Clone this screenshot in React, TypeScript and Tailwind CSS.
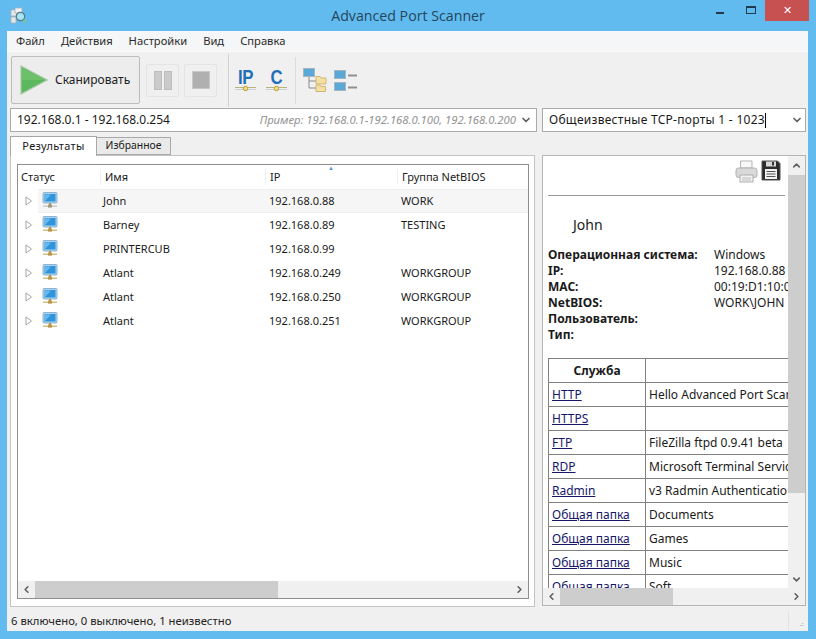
import React from "react";
import { ChevronDown, ChevronUp, ChevronLeft, ChevronRight } from "lucide-react";

const hosts = [
  { name: "John", ip: "192.168.0.88", group: "WORK", active: true },
  { name: "Barney", ip: "192.168.0.89", group: "TESTING" },
  { name: "PRINTERCUB", ip: "192.168.0.99", group: "" },
  { name: "Atlant", ip: "192.168.0.249", group: "WORKGROUP" },
  { name: "Atlant", ip: "192.168.0.250", group: "WORKGROUP" },
  { name: "Atlant", ip: "192.168.0.251", group: "WORKGROUP" },
];

const info = [
  ["Операционная система:", "Windows"],
  ["IP:", "192.168.0.88"],
  ["MAC:", "00:19:D1:10:05:3F"],
  ["NetBIOS:", "WORK\\JOHN"],
  ["Пользователь:", ""],
  ["Тип:", ""],
];

const services = [
  ["HTTP", "Hello Advanced Port Scanner"],
  ["HTTPS", ""],
  ["FTP", "FileZilla ftpd 0.9.41 beta"],
  ["RDP", "Microsoft Terminal Services"],
  ["Radmin", "v3 Radmin Authentication"],
  ["Общая папка", "Documents"],
  ["Общая папка", "Games"],
  ["Общая папка", "Music"],
  ["Общая папка", "Soft"],
];

function Monitor({ dim }: { dim?: boolean }) {
  return (
    <svg width="16" height="16" viewBox="0 0 16 16">
      <rect x="1" y="0.5" width="14" height="10.5" rx="1" fill="#a9d3ee" stroke="#8fb4cf" />
      <rect x="2.5" y="2" width="11" height="7.5" fill="#2f95dc" />
      <path d="M3 9 L9 2.5 H3 Z" fill="#6ab8ea" />
      <rect x="7" y="11" width="2" height="2" fill={dim ? "#9a9a8a" : "#b08f4c"} />
      <path d="M1 14.2 H15" stroke={dim ? "#c8c8c0" : "#d2b96f"} strokeWidth="1.4" />
      <rect x="6" y="12.6" width="4" height="3" fill={dim ? "#a09a80" : "#b9964a"} />
    </svg>
  );
}

function Expander() {
  return (
    <svg width="8" height="10" viewBox="0 0 8 10">
      <path d="M1 1 L6.5 5 L1 9 Z" fill="#fff" stroke="#a6a6a6" />
    </svg>
  );
}

function Play() {
  return (
    <svg width="28" height="30" viewBox="0 0 28 30">
      <path d="M1 1 L27 15 L1 29 Z" fill="#5cb85c" stroke="#a8c9a8" strokeWidth="1.2" />
      <path d="M1.8 2.4 L25.5 15 L1.8 15 Z" fill="#6cc06a" />
    </svg>
  );
}

function NetMark({ label }: { label: string }) {
  return (
    <div className="flex w-[21px] flex-col items-center">
      <span className="h-[17px] font-['Liberation_Sans',sans-serif] text-[21px] leading-[17px] font-bold tracking-[-0.5px] text-[#1f6fb8] [transform:scaleX(0.8)]">
        {label}
      </span>
      <svg width="21" height="7" viewBox="0 0 21 7">
        <path d="M0 2.5 H21" stroke="#b8b37e" />
        <path d="M0 4.5 H21" stroke="#cfcfcf" />
        <circle cx="10.5" cy="3.5" r="2.2" fill="#f3e07a" stroke="#b89c3d" />
      </svg>
    </div>
  );
}

function Tree() {
  return (
    <svg width="24" height="24" viewBox="0 0 24 24">
      <path d="M6 9 V20 H13 M6 13 H13" fill="none" stroke="#8a8a8a" />
      <rect x="0.5" y="0.5" width="11" height="8" fill="#5aa8d8" stroke="#a5b4be" />
      <path d="M13 8.5 h4 l1 1.5 h5 v6 h-10 Z" fill="#f5e0a3" stroke="#d0b577" />
      <path d="M13 17 h4 l1 1.5 h4.5 v5 h-9.5 Z" fill="#f5e0a3" stroke="#d0b577" />
    </svg>
  );
}

function Lists() {
  return (
    <svg width="23" height="21" viewBox="0 0 23 21">
      <rect x="0.5" y="0.5" width="11" height="8" fill="#5aa8d8" stroke="#a5b4be" />
      <rect x="0.5" y="12.5" width="11" height="8" fill="#5aa8d8" stroke="#a5b4be" />
      <path d="M14 5.5 H23 M14 17.5 H23" stroke="#8f8f8f" strokeWidth="2" />
    </svg>
  );
}

function Printer() {
  return (
    <svg width="23" height="23" viewBox="0 0 23 23">
      <path d="M5.5 1 H17 V8 H5.5 Z" fill="#f8f8f8" stroke="#b5b5b5" />
      <rect x="1" y="8" width="21" height="9.5" rx="2.5" fill="#d9d9d9" stroke="#b0b0b0" />
      <rect x="5" y="15" width="13" height="7" fill="#f2f2f2" stroke="#adadad" />
      <path d="M7 18 H16 M7 20 H16" stroke="#bcbcbc" />
    </svg>
  );
}

function Floppy() {
  return (
    <svg width="20" height="21" viewBox="0 0 20 21">
      <path d="M1 1 H16.5 L19 3.5 V20 H1 Z" fill="#2b2b2b" stroke="#555" />
      <rect x="5" y="1.5" width="10" height="5" fill="#d9d9d9" />
      <rect x="11" y="2" width="2" height="3.5" fill="#333" />
      <rect x="4" y="9" width="12" height="10" fill="#f2f2f2" />
      <path d="M5.5 11.5 H14.5 M5.5 14 H14.5 M5.5 16.5 H14.5" stroke="#555" />
    </svg>
  );
}

function AppIcon() {
  return (
    <svg width="18" height="18" viewBox="0 0 18 18">
      <rect x="1" y="3" width="6" height="6" fill="#e4e8ea" stroke="#a9b3b9" strokeWidth="0.8" />
      <rect x="5" y="1" width="7" height="5" fill="#f0f2f3" stroke="#a9b3b9" strokeWidth="0.8" />
      <rect x="1" y="10" width="5" height="6" fill="#e4e8ea" stroke="#a9b3b9" strokeWidth="0.8" />
      <circle cx="10.5" cy="9.5" r="4.2" fill="#a6e6f5" stroke="#5c7a86" strokeWidth="1.2" />
      <path d="M13.5 12.5 L16.5 15.5" stroke="#7cc08a" strokeWidth="2" />
    </svg>
  );
}

function ToolGhost({ children }: { children: React.ReactNode }) {
  return (
    <div className="flex h-[33px] w-[33px] items-center justify-center gap-[2px] rounded-[2px] border border-[#e4e4e4]">
      {children}
    </div>
  );
}

function HScroll({ thumb, lead }: { thumb: string; lead: string }) {
  return (
    <div className="flex h-[17px] shrink-0 items-center bg-[#f0f0f0]">
      <div className={`flex h-full items-center justify-center ${lead}`}>
        <ChevronLeft size={11} strokeWidth={3.5} color="#606060" />
      </div>
      <div className={`h-full bg-[#cdcdcd] ${thumb}`} />
      <div className="flex-1" />
      <div className="flex h-full w-[17px] items-center justify-center">
        <ChevronRight size={11} strokeWidth={3.5} color="#606060" />
      </div>
    </div>
  );
}

export default function App() {
  return (
    <div className="flex h-[639px] w-[816px] flex-col overflow-hidden bg-[#62bbef] font-['Noto_Sans',sans-serif] text-[11px] text-[#1a1a1a]">
      {/* Title bar */}
      <div className="relative flex h-[31px] shrink-0 items-center justify-center">
        <div className="absolute top-[7px] left-[10px]">
          <AppIcon />
        </div>
        <span className="font-['Open_Sans',sans-serif] text-[14.2px] text-[#24465c]">Advanced Port Scanner</span>
        <div className="absolute top-0 right-[7px] flex h-[21px] items-start">
          <div className="flex h-[21px] w-[34px] items-center justify-center pt-[5px]">
            <div className="h-[2px] w-[8px] bg-[#1d3a4e]" />
          </div>
          <div className="flex h-[21px] w-[28px] items-center justify-center pb-[2px]">
            <div className="h-[8px] w-[10px] border border-t-2 border-[#1d3a4e]" />
          </div>
          <div className="flex h-[21px] w-[44px] items-center justify-center bg-[#c75050] text-[11px] text-white">
            ✕
          </div>
        </div>
      </div>

      <div className="mr-[8px] mb-[8px] ml-[7px] flex min-h-0 flex-1 flex-col bg-[#f0f0f0]">
        {/* Menu */}
        <div className="flex h-[21px] shrink-0 items-center gap-[16px] border-b border-[#fafafa] bg-[#f5f6f7] pl-[9px] text-[11.2px] text-[#2a2a2a]">
          <span>Файл</span>
          <span>Действия</span>
          <span>Настройки</span>
          <span>Вид</span>
          <span>Справка</span>
        </div>

        {/* Toolbar */}
        <div className="flex h-[56px] shrink-0 items-center pl-[4px]">
          <div className="flex h-[48px] w-[129px] items-center gap-[7px] rounded-[2px] border border-[#bdbdbd] bg-[#ededed] pl-[8px] text-[12px] text-[#222]">
            <Play />
            <span>Сканировать</span>
          </div>
          <div className="ml-[6px] flex gap-[5px]">
            <ToolGhost>
              <div className="h-[19px] w-[8px] border border-[#bdbdbd] bg-[#cacaca]" />
              <div className="h-[19px] w-[8px] border border-[#bdbdbd] bg-[#cacaca]" />
            </ToolGhost>
            <ToolGhost>
              <div className="h-[18px] w-[18px] border border-[#c8c8c8] bg-[#b0b0b0]" />
            </ToolGhost>
          </div>
          <div className="ml-[11px] h-[53px] w-px bg-[#d2d2d2]" />
          <div className="ml-[6px] flex gap-[10px]">
            <NetMark label="IP" />
            <NetMark label="C" />
          </div>
          <div className="ml-[8px] h-[47px] w-px bg-[#dcdcdc]" />
          <div className="ml-[7px] flex items-center gap-[7px]">
            <Tree />
            <Lists />
          </div>
        </div>

        {/* Inputs */}
        <div className="flex h-[24px] shrink-0 gap-[5px] pl-[3px]">
          <div className="flex w-[527px] items-center border border-[#ababab] bg-white text-[12px]">
            <span className="pl-[6px]">192.168.0.1 - 192.168.0.254</span>
            <span className="ml-auto text-[11.3px] text-[#929292] italic">Пример: 192.168.0.1-192.168.0.100, 192.168.0.200</span>
            <div className="flex w-[20px] shrink-0 justify-center">
              <ChevronDown size={12} strokeWidth={3.5} color="#606060" />
            </div>
          </div>
          <div className="flex w-[264px] items-center border border-[#ababab] bg-white text-[12px]">
            <span className="pl-[6px] tracking-[0.28px]">Общеизвестные TCP-порты 1 - 1023</span>
            <div className="h-[15px] w-px bg-black" />
            <div className="ml-auto flex w-[17px] shrink-0 justify-center">
              <ChevronDown size={12} strokeWidth={3.5} color="#606060" />
            </div>
          </div>
        </div>

        {/* Main */}
        <div className="mt-[4px] flex min-h-0 flex-1 pl-[3px]">
          {/* Left */}
          <div className="flex w-[525px] shrink-0 flex-col">
            <div className="flex h-[19px] shrink-0 items-end">
              <div className="z-10 -mb-px flex h-[20px] w-[87px] items-center justify-center border border-b-0 border-[#a9a9a9] bg-white tracking-[0.3px]">
                Результаты
              </div>
              <div className="flex h-[18px] w-[74px] items-center justify-center border border-l-0 border-[#a9a9a9] bg-[#eaeaea] text-[10.4px]">
                Избранное
              </div>
            </div>
            <div className="flex h-[452px] flex-col border border-[#c4c4c4] bg-white pt-[8px] pr-[5px] pb-[7px] pl-[6px]">
              <div className="flex min-h-0 flex-1 flex-col border border-[#8e8e8e]">
                <div className="flex h-[24px] shrink-0 items-center">
                  <span className="w-[82px] pl-[3px]">Статус</span>
                  <span className="w-[165px] border-l border-[#f0f0f0] pl-[4px]">Имя</span>
                  <span className="relative w-[132px] border-l border-[#f0f0f0] pl-[4px]">
                    IP
                    <span className="absolute -top-[4px] left-[62px] text-[6px] leading-none text-[#5b93d6]">▲</span>
                  </span>
                  <span className="border-l border-[#f0f0f0] pl-[4px]">Группа NetBIOS</span>
                </div>
                <div className="min-h-0 flex-1">
                  {hosts.map((h, i) => (
                    <div key={i} className="flex h-[24px] items-center">
                      <div className="flex w-[20px] shrink-0 justify-center pl-[2px]">
                        <Expander />
                      </div>
                      <div className={`flex h-full flex-1 items-center ${h.active ? "border-y border-[#efefef] bg-[#f6f6f6]" : ""}`}>
                        <div className="flex w-[65px] shrink-0 pb-[2px] pl-[4px]">
                          <Monitor dim={h.active} />
                        </div>
                        <span className="w-[166px] shrink-0">{h.name}</span>
                        <span className="w-[132px] shrink-0">{h.ip}</span>
                        <span>{h.group}</span>
                      </div>
                    </div>
                  ))}
                </div>
                <HScroll lead="w-[17px]" thumb="w-[243px]" />
              </div>
            </div>
          </div>

          {/* Right */}
          <div className="mb-[2px] ml-[7px] flex h-[451px] w-[264px] flex-col self-end border border-[#b5b5b5] bg-white">
            <div className="flex min-h-0 flex-1">
              <div className="flex min-w-0 flex-1 flex-col overflow-hidden pt-[4px] pl-[5px]">
                <div className="flex h-[24px] shrink-0 justify-end gap-[3px] pr-[7px]">
                  <Printer />
                  <Floppy />
                </div>
                <div className="mt-[11px] mr-[3px] h-px shrink-0 bg-[#9a9a9a]" />
                <div className="mt-[20px] ml-[25px] h-[18px] shrink-0 text-[14px] leading-[18px]">John</div>
                <div className="mt-[13px] shrink-0">
                  {info.map(([k, v]) => (
                    <div key={k} className="flex h-[16px] items-center text-[12px] whitespace-nowrap">
                      <span className="w-[166px] shrink-0 font-bold">{k}</span>
                      <span>{v}</span>
                    </div>
                  ))}
                </div>
                <div className="mt-[15px] w-[400px] shrink-0 border-t border-l border-[#808080] text-[12px]">
                  <div className="flex h-[24px] border-b border-[#808080]">
                    <div className="flex w-[97px] shrink-0 items-center justify-center border-r border-[#808080] font-bold">Служба</div>
                  </div>
                  {services.map(([s, d], i) => (
                    <div key={i} className="flex h-[24px] border-b border-[#808080] whitespace-nowrap">
                      <div className="flex w-[97px] shrink-0 items-center border-r border-[#808080] pl-[3px]">
                        <span className="text-[#16166b] underline">{s}</span>
                      </div>
                      <div className="flex items-center pl-[3px]">{d}</div>
                    </div>
                  ))}
                </div>
              </div>
              <div className="flex w-[17px] shrink-0 flex-col bg-[#f0f0f0]">
                <div className="flex h-[19px] items-center justify-center">
                  <ChevronUp size={11} strokeWidth={3.5} color="#606060" />
                </div>
                <div className="h-[318px] bg-[#cdcdcd]" />
                <div className="flex-1" />
                <div className="flex h-[17px] items-center justify-center">
                  <ChevronDown size={11} strokeWidth={3.5} color="#606060" />
                </div>
              </div>
            </div>
            <HScroll lead="w-[17px]" thumb="w-[113px]" />
          </div>
        </div>

        {/* Status bar */}
        <div className="flex h-[23px] shrink-0 items-center pt-[4px] pl-[4px] text-[11.3px] text-[#222]">
          <span>6 включено, 0 выключено, 1 неизвестно</span>
          <div className="mr-[4px] ml-auto flex h-full items-end gap-[10px]">
            <div className="h-[20px] w-px bg-[#e2e2e2]" />
            <div className="mb-[3px] text-[7px] leading-[7px] text-[#b5b5b5]">⠴</div>
          </div>
        </div>
      </div>
    </div>
  );
}
